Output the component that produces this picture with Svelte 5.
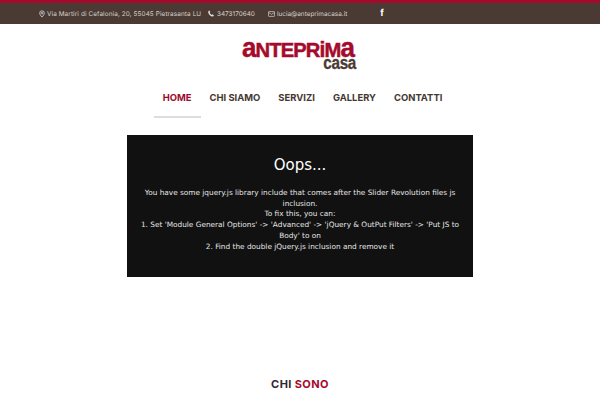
<script>
  const nav = ['HOME', 'CHI SIAMO', 'SERVIZI', 'GALLERY', 'CONTATTI'];
</script>

<div class="page">
  <header class="topbar">
    <span class="item addr">
      <svg width="6" height="8" viewBox="0 0 9 11" fill="none" stroke="#d8d2cc" stroke-width="1.2"><path d="M4.5 10.200C2.600 7.800 1 6.200 1 4.200a3.500 3.500 0 0 1 7 0c0 2-1.600 3.600-3.500 6z"/><circle cx="4.500" cy="4.200" r="1.300"/></svg>
      <span>Via Martiri di Cefalonia, 20, 55045 Pietrasanta LU</span>
    </span>
    <span class="item phone">
      <svg width="6" height="7" viewBox="0 0 7 8" fill="#e4dfda"><path d="M1.500.4 2.700 2.300 1.900 3.200C2.400 4.500 3.200 5.300 4.300 5.700L5.200 5 7 6.300C6.500 7.300 5.600 7.800 4.700 7.500 2.500 6.800.9 5 .3 2.700.1 1.700.6.800 1.500.4z"/></svg>
      <span>3473170640</span>
    </span>
    <span class="item mail">
      <svg width="7" height="6" viewBox="0 0 8 7" fill="none" stroke="#d8d2cc" stroke-width="0.8"><rect x="0.5" y="0.7" width="7" height="5.600" rx="0.6"/><path d="M.5 1.500 4 4l3.500-2.500"/></svg>
      <span>lucia@anteprimacasa.it</span>
    </span>
    <span class="fb">f</span>
  </header>

  <div class="logo">
    <div class="logo-main"><span class="low">a</span>NTEPR<span class="low i">i</span>M<span class="low">a</span></div>
    <div class="logo-sub">casa</div>
  </div>

  <nav class="nav">
    {#each nav as label, i}
      <span class="link" class:active={i === 0}>{label}</span>
    {/each}
  </nav>

  <section class="oops">
    <h2>Oops...</h2>
    <p>You have some jquery.js library include that comes after the Slider Revolution files js inclusion.<br>
    To fix this, you can:<br>
    1. Set 'Module General Options' -&gt; 'Advanced' -&gt; 'jQuery &amp; OutPut Filters' -&gt; 'Put JS to Body' to on<br>
    2. Find the double jQuery.js inclusion and remove it</p>
  </section>

  <h3 class="title">CHI <span>SONO</span></h3>
</div>

<style>
  :global(body) { margin: 0; background: #fff; }
  .page { width: 600px; height: 400px; overflow: hidden; font-family: "Inter", "Open Sans", sans-serif; }

  .topbar {
    height: 21px;
    border-top: 3px solid #a50a2c;
    background: #4a3a33;
    color: #d8d2cc;
    display: flex;
    align-items: center;
    padding-left: 38px;
    font-size: 6.400px;
    font-family: "Inter", sans-serif;
    text-rendering: geometricPrecision;
  }
  .item { display: inline-flex; align-items: center; gap: 3px; white-space: nowrap; }
  .item svg { flex: none; }
  .addr { width: 170px; flex: none; padding-left: 1px; gap: 2px; box-sizing: border-box; letter-spacing: 0.1px; }
  .phone { width: 60px; flex: none; }
  .mail { width: 111px; flex: none; gap: 2px; }
  .fb { color: #fff; font: bold 10px "Liberation Sans", sans-serif; width: 6px; text-align: center; }

  .logo { margin-top: 17px; height: 29px; width: 114px; margin-left: 242px; line-height: 1; }
  .logo-main {
    font: 900 21px/17px "Liberation Sans", sans-serif;
    height: 17px;
    color: #a50a2c;
    letter-spacing: -0.9px;
    -webkit-text-stroke: 0.5px #a50a2c;
    white-space: nowrap;
    transform-origin: left top;
    transform: scaleX(0.96);
  }
  .low { font-size: 27px; line-height: 15px; }
  .i { font-size: 22px; }
  .logo-sub {
    font: bold 18px/11px "Liberation Sans", sans-serif;
    color: #4a3a33;
    text-align: right;
    letter-spacing: -0.4px;
    -webkit-text-stroke: 0.3px #4a3a33;
    transform-origin: right center;
    transform: scaleX(0.85);
  }

  .nav {
    margin-top: 11px;
    display: flex;
    justify-content: center;
    height: 54px;
    font-weight: 700;
    font-size: 9.450px;
    color: #453833;
    padding-left: 5px;
    box-sizing: border-box;
  }
  .link { padding: 10px 9px 0; height: 25px; white-space: nowrap; line-height: 14px; }
  .active { color: #9c0c2e; border-bottom: 2px solid #ddd; }

  .oops {
    box-sizing: border-box;
    width: 346px;
    height: 142px;
    margin: 0 auto;
    background: #111;
    color: #e6e6e6;
    font-family: "DejaVu Sans", sans-serif;
    text-align: center;
    padding: 20px 10px 0;
  }
  h2 { margin: 0 0 13px; font-weight: 400; font-size: 15px; line-height: 20px; color: #fff; }
  p { margin: 0; font-size: 7.350px; line-height: 10.700px; }

  .title {
    margin: 100px 0 0;
    text-align: center;
    font-size: 11px;
    font-weight: 700;
    line-height: 14px;
    color: #2d2a33;
    letter-spacing: 0.4px;
  }
  .title span { color: #a50a2c; }
</style>
